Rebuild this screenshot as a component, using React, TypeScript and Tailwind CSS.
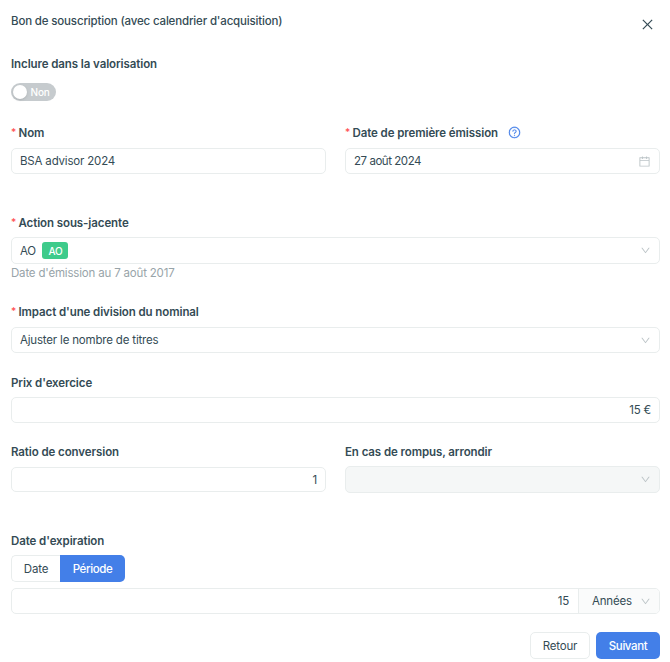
import React from 'react';
import {
    AiOutlineCalendar,
    AiOutlineClose,
    AiOutlineDown,
    AiOutlineQuestionCircle,
} from 'react-icons/ai';

interface FieldProps {
    label: string;
    required?: boolean;
    help?: boolean;
    className?: string;
    children: React.ReactNode;
}

const Field: React.FC<FieldProps> = ({ label, required, help, className = '', children }) => (
    <div className={`min-w-0 ${className}`}>
        <div className={`flex h-[30px] items-center font-semibold tracking-[-0.09px] whitespace-nowrap ${required ? '' : 'pt-px'}`}>
            {required && <span className="mr-[2px] mb-[3px] w-[5.5px] text-[10px] leading-none font-medium text-[#ff4d4f]">*</span>}
            <span>{label}</span>
            {help && <AiOutlineQuestionCircle strokeWidth={12} className="mb-[2px] ml-[9.5px] h-[13px] w-[13px] text-[#437fe8]" />}
        </div>
        {children}
    </div>
);

interface BoxProps {
    className?: string;
    children?: React.ReactNode;
}

const Box: React.FC<BoxProps> = ({ className = 'h-[26px]', children }) => (
    <div className={`flex items-center rounded-[5px] border border-[#e9eded] px-[8px] ${className}`}>{children}</div>
);

const Chevron: React.FC = () => <AiOutlineDown className="ml-auto h-[11px] w-[11px] text-[#bcc4c7]" />;

export default function App() {
    return (
        <main className="h-[662px] w-[670px] bg-white pr-[10px] pl-[11px] font-['Inter',sans-serif] text-[11.5px] leading-4 tracking-[-0.18px] text-[#344b55]">
            <header className="flex h-[48px] justify-between">
                <h1 className="pt-[13px] font-medium tracking-[-0.16px]">Bon de souscription (avec calendrier d'acquisition)</h1>
                <button className="mt-[17px] mr-[5px] h-[15px] w-[15px]" aria-label="Fermer">
                    <AiOutlineClose className="h-[15px] w-[15px]" />
                </button>
            </header>

            <Field label="Inclure dans la valorisation" className="h-[70px]">
                <button role="switch" aria-checked="false" className="mt-[5px] flex h-[18px] w-[45px] items-center rounded-full bg-[#c6cbce] pl-[2px] text-[10px] font-medium text-white">
                    <span className="mr-[3.5px] h-[14px] w-[14px] rounded-full bg-white shadow-sm" />
                    Non
                </button>
            </Field>

            <div className="grid h-[90px] grid-cols-2 gap-[19px]">
                <Field label="Nom" required>
                    <Box>BSA advisor 2024</Box>
                </Field>
                <Field label="Date de première émission" required help>
                    <Box>
                        <span className="tracking-[-0.45px]">27 août 2024</span>
                        <AiOutlineCalendar className="ml-auto h-[13px] w-[13px] text-[#bcc4c7]" />
                    </Box>
                </Field>
            </div>

            <Field label="Action sous-jacente" required className="h-[89px]">
                <Box className="-mt-px h-[27px]">
                    AO
                    <span className="ml-[6.5px] flex h-[17px] w-[26px] items-center justify-center rounded-[3px] bg-[#3ecb8b] text-[10px] font-medium text-white">AO</span>
                    <Chevron />
                </Box>
                <p className="pt-px text-[#98a4a9]">Date d'émission au 7 août 2017</p>
            </Field>

            <Field label="Impact d'une division du nominal" required className="h-[70px]">
                <Box>
                    Ajuster le nombre de titres
                    <Chevron />
                </Box>
            </Field>

            <Field label="Prix d'exercice" className="h-[69px]">
                <Box className="h-[26px] justify-end">15 €</Box>
            </Field>

            <div className="grid h-[89px] grid-cols-2 gap-[19px]">
                <Field label="Ratio de conversion">
                    <Box className="mt-px h-[25px] justify-end">1</Box>
                </Field>
                <Field label="En cas de rompus, arrondir">
                    <Box className="h-[27px] bg-[#f5f7f7]">
                        <Chevron />
                    </Box>
                </Field>
            </div>

            <Field label="Date d'expiration" className="h-[107px]">
                <div className="flex h-[27px]">
                    <button className="w-[49px] rounded-l-[5px] border border-r-0 border-[#e9eded]">Date</button>
                    <button className="w-[65px] rounded-r-[5px] bg-[#437fe8] font-medium tracking-[-0.4px] text-white">Période</button>
                </div>
                <div className="mt-[6px] flex h-[26px] items-center overflow-hidden rounded-[5px] border border-[#e9eded]">
                    <span className="flex-1 pr-[9px] text-right">15</span>
                    <div className="flex h-full w-[81px] items-center border-l border-[#e9eded] bg-[#fafbfb] pr-[8px] pl-[13px]">
                        Années
                        <Chevron />
                    </div>
                </div>
            </Field>

            <footer className="flex h-[27px] justify-end gap-[6px]">
                <button className="w-[60px] rounded-[5px] border border-[#e9eded]">Retour</button>
                <button className="w-[64px] rounded-[5px] bg-[#437fe8] font-medium tracking-[-0.4px] text-white">Suivant</button>
            </footer>
        </main>
    );
}
